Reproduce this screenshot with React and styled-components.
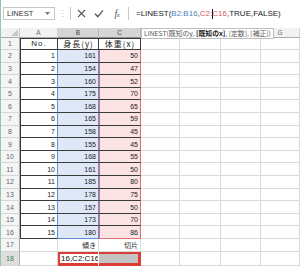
import React from "react";
import styled, { createGlobalStyle, css } from "styled-components";

const GRID = "#dadada";
const EDGE = "#3a3a3a";
const BLUE = "#5b8ed8";
const RED = "#e07070";
const OUTLINE = "#dc3c36";

const GlobalStyle = createGlobalStyle`
  html, body {
    margin: 0;
    padding: 0;
    background: #ffffff;
  }
  body {
    font-family: "Liberation Sans", Arial, sans-serif;
    overflow: hidden;
  }
`;

const Window = styled.div`
  width: 300px;
  height: 266px;
  box-sizing: border-box;
  overflow: hidden;
  border-left: 1px solid #9cc4aa;
  background: #fff;
`;

const FormulaBar = styled.div`
  display: flex;
  align-items: center;
  height: 27.5px;
  padding-left: 2px;
`;

const NameBox = styled.div`
  display: flex;
  align-items: center;
  justify-content: space-between;
  box-sizing: border-box;
  width: 52px;
  height: 13px;
  padding: 0 4px 0 3px;
  border: 1px solid #c6c6c6;
  font-size: 7.5px;
  color: #333;
`;

const Grip = styled.div`
  width: 15px;
  text-align: center;
  font-family: "DejaVu Sans", sans-serif;
  font-size: 8px;
  color: #b0b0b0;
`;

const FormulaField = styled.div`
  flex: 1;
  display: flex;
  height: 13px;
`;

const IconZone = styled.div`
  display: flex;
  align-items: center;
  width: 58px;
  padding-left: 1px;
  box-sizing: border-box;
  border-left: 1px solid #c6c6c6;
`;

const IconSlot = styled.div`
  display: flex;
  align-items: center;
  justify-content: center;
  width: 18px;
  height: 13px;
  color: #5a5a5a;
`;

const Fx = styled.span`
  font-family: "Liberation Serif", "Times New Roman", serif;
  font-style: italic;
  font-size: 10px;
  color: #555;
  letter-spacing: -0.5px;

  & > small {
    font-size: 7px;
  }
`;

const FormulaInput = styled.div`
  flex: 1;
  display: flex;
  align-items: center;
  padding-left: 7px;
  border-left: 1px solid #c6c6c6;
  font-size: 8px;
  color: #222;
  white-space: nowrap;
`;

const Ref = styled.span`
  color: ${(p) => (p.$tone === "blue" ? "#4f80c6" : "#d9605e")};
`;

const Cursor = styled.span`
  display: inline-block;
  width: 1px;
  height: 10px;
  margin: 0 -0.5px;
  background: #111;
  vertical-align: middle;
`;

const Sheet = styled.div`
  position: relative;
  display: grid;
  grid-template-columns: 19px 38px 41px 42px 39px 41px 40px 39px;
  grid-template-rows: 10px repeat(17, 12.6px) 14px;
`;

const Corner = styled.div`
  display: flex;
  align-items: flex-end;
  justify-content: flex-end;
  box-sizing: border-box;
  padding: 0 1px 1px 0;
  background: #f2f2f2;
  border-right: 1px solid #c8c8c8;
  border-bottom: 1px solid #ababab;

  &::after {
    content: "";
    width: 0;
    height: 0;
    border-left: 7px solid transparent;
    border-bottom: 7px solid #c9c9c9;
  }
`;

const HeadCell = styled.div`
  display: flex;
  align-items: center;
  justify-content: center;
  box-sizing: border-box;
  font-size: 6.5px;
  color: ${(p) => (p.$active ? "#3a3a3a" : "#6a6a6a")};
  background: ${(p) => (p.$active ? "#d5d5d5" : "#f2f2f2")};
  border-right: 1px solid ${(p) => (p.$active ? "#b9b9b9" : "#d4d4d4")};
  border-bottom: 1px solid
    ${(p) => (p.$accent ? "#7fb894" : p.$active ? "#8f8f8f" : "#ababab")};
`;

const RowHead = styled.div`
  display: flex;
  align-items: center;
  justify-content: center;
  box-sizing: border-box;
  font-size: 7px;
  color: ${(p) => (p.$active ? "#3f7a55" : "#666")};
  background: ${(p) => (p.$active ? "#dedede" : "#f5f5f5")};
  border-right: 1px solid #ababab;
  border-bottom: 1px solid #d6d6d6;
`;

const fills = {
  blue: "#dfe8f7",
  pink: "#fbe3e3",
  gray: "#c4c4c4",
};

const outlineShadow = {
  start: `inset 2px 0 0 ${OUTLINE}, inset 0 2px 0 ${OUTLINE}, inset 0 -2px 0 ${OUTLINE}`,
  end: `inset -2px 0 0 ${OUTLINE}, inset 0 2px 0 ${OUTLINE}, inset 0 -2px 0 ${OUTLINE}`,
};

const Cell = styled.div`
  display: flex;
  align-items: center;
  justify-content: ${(p) =>
    p.$align === "right" ? "flex-end" : p.$align === "center" ? "center" : "flex-start"};
  box-sizing: border-box;
  padding: 0 2px 0 3px;
  overflow: hidden;
  white-space: nowrap;
  font-size: 7px;
  color: #1e1e1e;
  background: ${(p) => fills[p.$fill] || "#fff"};
  border-right: 1px solid ${(p) => p.$right || GRID};
  border-bottom: 1px solid ${(p) => p.$bottom || GRID};
  ${(p) => {
    const list = [];
    if (p.$top) list.push(`inset 0 1px 0 ${p.$top}`);
    if (p.$left) list.push(`inset 1px 0 0 ${p.$left}`);
    if (p.$outline) list.push(outlineShadow[p.$outline]);
    return list.length ? css`box-shadow: ${list.join(", ")};` : "";
  }}
  ${(p) =>
    p.$jp &&
    css`
      font-family: "Noto Sans CJK JP", "Liberation Sans", sans-serif;
    `}
  ${(p) =>
    p.$title &&
    css`
      font-size: 8px;
      letter-spacing: 1px;
    `}
  ${(p) =>
    p.$edit &&
    css`
      font-size: 8px;
      padding-left: 3px;
      color: #111;
    `}
`;

const Tooltip = styled.div`
  position: absolute;
  left: 140px;
  top: 0;
  height: 9px;
  display: flex;
  align-items: center;
  padding: 0 2px;
  background: #fff;
  border: 1px solid #bdbdbd;
  font-family: "Noto Sans CJK JP", "Liberation Sans", sans-serif;
  font-size: 6.8px;
  color: #555;
  white-space: nowrap;

  & > b {
    color: #222;
    font-weight: 700;
  }
`;

const COLS = ["A", "B", "C", "D", "E", "F", "G"];
// headers hidden beneath the argument tooltip
const COVERED = ["D", "E", "F"];

const data = [
  [1, 161, 50],
  [2, 154, 47],
  [3, 160, 52],
  [4, 175, 70],
  [5, 168, 65],
  [6, 165, 59],
  [7, 158, 45],
  [8, 155, 45],
  [9, 168, 55],
  [10, 161, 50],
  [11, 185, 80],
  [12, 178, 75],
  [13, 157, 50],
  [14, 173, 70],
  [15, 180, 86],
];

// cell props for row r (1..18) and column c (0 = A)
function cellFor(r, c) {
  if (r === 1 && c < 3) {
    const titles = ["No.", "身長(y)", "体重(x)"];
    return {
      text: titles[c],
      $align: "center",
      $title: true,
      $jp: c > 0,
      $right: EDGE,
      $bottom: EDGE,
      $top: EDGE,
      $left: c === 0 ? EDGE : undefined,
    };
  }
  if (r >= 2 && r <= 16 && c < 3) {
    const row = data[r - 2];
    const last = r === 16;
    if (c === 0) {
      return { text: row[0], $align: "right", $left: EDGE, $right: BLUE, $bottom: EDGE };
    }
    if (c === 1) {
      return { text: row[1], $align: "right", $fill: "blue", $right: BLUE, $bottom: last ? BLUE : EDGE };
    }
    return { text: row[2], $align: "right", $fill: "pink", $left: RED, $right: RED, $bottom: last ? RED : EDGE };
  }
  if (r === 17 && c === 1) return { text: "傾き", $align: "right", $jp: true };
  if (r === 17 && c === 2) return { text: "切片", $align: "right", $jp: true };
  if (r === 18 && c === 1) return { text: "16,C2:C16", $edit: true, $outline: "start", $right: "transparent", $bottom: OUTLINE };
  if (r === 18 && c === 2) return { $fill: "gray", $outline: "end", $right: OUTLINE, $bottom: OUTLINE };
  return {};
}

const CancelIcon = () => (
  <svg width="9" height="9" viewBox="0 0 9 9">
    <path d="M1 1 L8 8 M8 1 L1 8" stroke="#5a5a5a" strokeWidth="1.1" fill="none" />
  </svg>
);

const EnterIcon = () => (
  <svg width="10" height="9" viewBox="0 0 10 9">
    <path d="M1 4.8 L3.8 7.6 L9 1.4" stroke="#5a5a5a" strokeWidth="1.4" fill="none" />
  </svg>
);

const DropArrow = () => (
  <svg width="5" height="3" viewBox="0 0 5 3">
    <path d="M0 0 H5 L2.5 3 Z" fill="#777" />
  </svg>
);

export default function App() {
  const rows = [];
  for (let r = 1; r <= 18; r++) {
    rows.push(
      <RowHead key={`h${r}`} $active={r === 18}>
        {r}
      </RowHead>
    );
    COLS.forEach((_, c) => {
      const { text, ...props } = cellFor(r, c);
      rows.push(
        <Cell key={`${r}-${c}`} {...props}>
          {text}
        </Cell>
      );
    });
  }

  return (
    <>
      <GlobalStyle />
      <Window>
        <FormulaBar>
          <NameBox>
            LINEST
            <DropArrow />
          </NameBox>
          <Grip>⋮</Grip>
          <FormulaField>
            <IconZone>
              <IconSlot>
                <CancelIcon />
              </IconSlot>
              <IconSlot>
                <EnterIcon />
              </IconSlot>
              <IconSlot>
                <Fx>
                  f<small>x</small>
                </Fx>
              </IconSlot>
            </IconZone>
            <FormulaInput>
              =LINEST(<Ref $tone="blue">B2:B16</Ref>,<Ref $tone="red">C2:</Ref>
              <Cursor />
              <Ref $tone="red">C16</Ref>,TRUE,FALSE)
            </FormulaInput>
          </FormulaField>
        </FormulaBar>

        <Sheet>
          <Corner />
          {COLS.map((col) => (
            <HeadCell key={col} $active={col === "B" || col === "C"} $accent={col === "F"}>
              {COVERED.includes(col) ? null : col}
            </HeadCell>
          ))}
          {rows}
          <Tooltip>
            LINEST(既知のy,&nbsp;<b>[既知のx]</b>, [定数], [補正])
          </Tooltip>
        </Sheet>
      </Window>
    </>
  );
}
